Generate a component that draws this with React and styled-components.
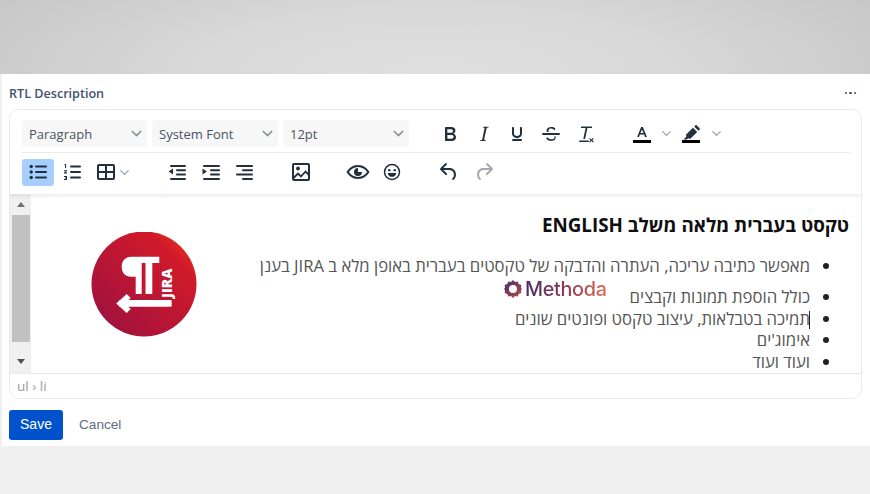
import React from "react";
import styled, { createGlobalStyle } from "styled-components";
import { ChevronDown } from "lucide-react";

const Global = createGlobalStyle`
  html, body { margin: 0; padding: 0; background: #f0f0f0; }
  body { width: 870px; height: 494px; overflow: hidden; font-family: "Open Sans", "Liberation Sans", sans-serif; }
`;

const Page = styled.div`
  width: 870px;
  height: 494px;
  display: flex;
  flex-direction: column;
  background: #f0f0f0;
`;
const TopBand = styled.div`
  height: 74px;
  flex: none;
  background: radial-gradient(ellipse 620px 170px at 50% 100%, #dfdfdf 0%, #d8d8d8 40%, #c8c8c8 80%, #bebebe 100%);
`;
const Card = styled.section`
  margin-left: 2px;
  height: 372px;
  flex: none;
  box-sizing: border-box;
  background: #fff;
  padding: 0 8px 0 7px;
  display: flex;
  flex-direction: column;
`;
const Header = styled.header`
  height: 35px;
  flex: none;
  box-sizing: border-box;
  padding-top: 3px;
  display: flex;
  align-items: center;
  justify-content: space-between;
`;
const Title = styled.h2`
  margin: 0;
  font-size: 12.6px;
  font-weight: 600;
  color: #42526e;
`;
const Dots = styled.div`
  display: flex;
  gap: 2px;
  margin-right: 6px;
  span { width: 2.5px; height: 2.5px; border-radius: 50%; background: #42526e; }
`;
const Editor = styled.div`
  height: 290px;
  box-sizing: border-box;
  border: 1px solid #e9e9e9;
  border-radius: 10px;
  display: flex;
  flex-direction: column;
  overflow: hidden;
  flex: none;
`;
const Toolbar = styled.div`
  height: 84px;
  flex: none;
  box-sizing: border-box;
  padding: 10px 11px 0 12px;
  box-shadow: 0 2px 4px rgba(34, 47, 62, 0.1);
  position: relative;
  z-index: 1;
  background: #fff;
`;
const Row = styled.div`
  display: flex;
  align-items: ${(p) => (p.$line ? "flex-start" : "center")};
  height: ${(p) => p.$h}px;
  border-bottom: ${(p) => (p.$line ? "1px solid #ececec" : "none")};
  box-sizing: border-box;
`;
const Select = styled.div`
  width: ${(p) => p.$w}px;
  height: 27px;
  margin-right: 5px;
  border-radius: 3px;
  background: #f7f7f7;
  box-sizing: border-box;
  padding: 0 2px 0 7px;
  display: flex;
  align-items: center;
  justify-content: space-between;
  font-size: 13px;
  color: #4a5462;
  svg { color: #8a929c; }
`;
const Tool = styled.button`
  width: ${(p) => p.$w || 33.7}px;
  height: 27px;
  flex: none;
  margin-left: ${(p) => p.$gap || 0}px;
  padding: 0;
  border: 0;
  border-radius: 3px;
  background: ${(p) => (p.$active ? "#a6ceff" : "transparent")};
  display: flex;
  align-items: center;
  justify-content: center;
  color: ${(p) => (p.$off ? "#a3a9b0" : "#222f3e")};
  svg { display: block; }
`;
const Chev = styled(ChevronDown)`
  color: #9aa1aa;
`;
const Body = styled.div`
  flex: 1;
  min-height: 0;
  display: flex;
  position: relative;
`;
const Scrollbar = styled.div`
  width: 21px;
  flex: none;
  background: #f0f0f0;
  display: flex;
  flex-direction: column;
  align-items: center;
  padding-top: 8px;
  box-sizing: border-box;
`;
const Arrow = styled.div`
  width: 0;
  height: 0;
  border-left: 4.5px solid transparent;
  border-right: 4.5px solid transparent;
  ${(p) =>
    p.$up
      ? "border-bottom: 5px solid #6f6f6f; margin-bottom: 8px;"
      : "border-top: 5px solid #505050; margin-top: 17px;"}
`;
const Thumb = styled.div`
  width: 18px;
  height: 127px;
  background: #c1c1c1;
`;
const Content = styled.div`
  flex: 1;
  direction: rtl;
  padding: 19px 12px 0 0;
  box-sizing: border-box;
  overflow: hidden;
`;
const Heading = styled.h1`
  margin: 0 0 18px;
  font-size: 18.8px;
  line-height: 24px;
  font-weight: 700;
  color: #0f0f0f;
`;
const List = styled.ul`
  margin: 0;
  padding: 0 39px 0 0;
  list-style: disc;
  font-size: 16.7px;
  line-height: 21.4px;
  color: #555;
  li::marker { color: #222; }
`;
const Item = styled.li`
  margin-bottom: ${(p) => p.$after || 0}px;
  white-space: nowrap;
`;
const Caret = styled.span`
  display: inline-block;
  width: 1px;
  height: 18px;
  background: #222;
  vertical-align: -4px;
  margin-left: -1px;
`;
const LogoMark = styled.svg`
  position: absolute;
  left: 81px;
  top: 38px;
`;
const Methoda = styled.div`
  position: absolute;
  left: 494px;
  top: 83px;
  display: flex;
  align-items: center;
  gap: 3px;
`;
const MethodaWord = styled.span`
  font-family: "Inter", "Liberation Sans", sans-serif;
  font-size: 19.8px;
  font-weight: 500;
  line-height: 24px;
  letter-spacing: -0.3px;
  background: linear-gradient(90deg, #4a2a66 0%, #8f3a5c 50%, #de6a4c 100%);
  -webkit-background-clip: text;
  background-clip: text;
  color: transparent;
`;
const Status = styled.div`
  height: 25px;
  flex: none;
  box-sizing: border-box;
  border-top: 1px solid #e9e9e9;
  padding-left: 7px;
  display: flex;
  align-items: center;
  font-size: 13.5px;
  color: #9a9a9a;
  background: #fff;
  position: relative;
`;
const Actions = styled.div`
  display: flex;
  align-items: center;
  gap: 16px;
  margin-top: 11px;
`;
const Save = styled.button`
  width: 54px;
  height: 30px;
  border: 0;
  border-radius: 3px;
  background: #0052cc;
  color: #fff;
  font: 400 14px/28px "Liberation Sans", sans-serif;
  padding: 0 0 2px;
  box-sizing: border-box;
`;
const Cancel = styled.button`
  border: 0;
  background: none;
  padding: 0 0 2px;
  color: #5e6c84;
  font: 400 13.6px "Liberation Sans", sans-serif;
`;

const I = ({ children, s = 24 }) => (
  <svg width={s} height={s} viewBox="0 0 24 24" fill="currentColor">{children}</svg>
);
const Line = ({ x, y, w, h = 2 }) => <rect x={x} y={y} width={w} height={h} rx={h / 2} />;

const BulletIcon = () => (
  <I>
    <circle cx="5.2" cy="6.5" r="1.7" /><circle cx="5.2" cy="12" r="1.7" /><circle cx="5.2" cy="17.5" r="1.7" />
    <Line x={9} y={5.5} w={12} /><Line x={9} y={11} w={12} /><Line x={9} y={16.5} w={12} />
  </I>
);
const NumberIcon = () => (
  <I>
    <Line x={10} y={5.5} w={11} /><Line x={10} y={11} w={11} /><Line x={10} y={16.5} w={11} />
    <path d="M4.5 4h1.6v4H5V5.1h-.5zM4 10.2h3v.9l-1.6 1.5H7v.9H4v-.9l1.6-1.5H4zM4 16h3v3.9H4V19h2v-.6H4.8v-.8H6V17H4z" />
  </I>
);
const TableIcon = () => (
  <I>
    <path d="M19 4a2 2 0 0 1 2 2v12a2 2 0 0 1-2 2H5a2 2 0 0 1-2-2V6c0-1.1.9-2 2-2h14zM5 13v5h6v-5H5zm14 0h-6v5h6v-5zm0-7h-6v5h6V6zM5 11h6V6H5v5z" />
  </I>
);
const OutdentIcon = () => (
  <I>
    <Line x={5} y={5} w={16} /><Line x={11} y={9.3} w={10} /><Line x={11} y={13.6} w={10} /><Line x={5} y={18} w={16} />
    <path d="M8 8.6v5.8L3.6 11.5z" />
  </I>
);
const IndentIcon = () => (
  <I>
    <Line x={4} y={5} w={17} /><Line x={11} y={9.3} w={10} /><Line x={11} y={13.6} w={10} /><Line x={4} y={18} w={17} />
    <path d="M3.5 8.6v5.8l4.4-2.9z" />
  </I>
);
const AlignRightIcon = () => (
  <I>
    <Line x={4} y={5} w={17} /><Line x={10} y={9.3} w={11} /><Line x={4} y={13.6} w={17} /><Line x={10} y={18} w={11} />
  </I>
);
const ImageIcon = () => (
  <I>
    <path d="M5 3h14a2 2 0 0 1 2 2v14a2 2 0 0 1-2 2H5a2 2 0 0 1-2-2V5c0-1.1.9-2 2-2zm0 2v14h14V5H5z" />
    <path d="M4.500 18l4.500-4.500 3 3 4.500-5 3.500 3.500" fill="none" stroke="currentColor" strokeWidth="1.800" />
    <circle cx="9" cy="8.500" r="1.900" />
  </I>
);
const EyeIcon = () => (
  <svg width="26" height="24" viewBox="0 0 26 24" fill="currentColor">
    <path d="M13 5c5.400 0 9.600 3.600 11.500 7-1.900 3.400-6.100 7-11.500 7S3.400 15.400 1.500 12C3.400 8.600 7.600 5 13 5zm0 2C9 7 5.800 9.400 3.900 12 5.800 14.600 9 17 13 17s7.200-2.400 9.100-5C20.200 9.400 17 7 13 7z" />
    <path d="M13 8a4 4 0 1 0 4 4h-4z" />
  </svg>
);
const SmileIcon = () => (
  <I s={22}>
    <path d="M12 3a9 9 0 1 1 0 18 9 9 0 0 1 0-18zm0 1.700a7.300 7.300 0 1 0 0 14.600 7.300 7.300 0 0 0 0-14.600z" />
    <circle cx="9" cy="10" r="1.300" /><circle cx="15" cy="10" r="1.300" />
    <path d="M7.500 13h9c0 2.500-2 4.300-4.500 4.300S7.500 15.500 7.500 13z" />
  </I>
);
const UndoIcon = () => (
  <I>
    <path d="M6.400 8H12c3.700 0 6.200 2 6.800 5.100.6 2.700-.4 5.600-2.300 6.800a1 1 0 0 1-1-1.700c1.100-.7 1.700-2.700 1.300-4.700-.4-2.100-2.100-3.500-4.800-3.500H6.400l3.300 3.300a1 1 0 1 1-1.400 1.400l-5-5a1 1 0 0 1 0-1.400l5-5a1 1 0 0 1 1.400 1.400L6.400 8z" />
  </I>
);
const RedoIcon = () => (
  <I>
    <path d="M17.600 8H12c-3.700 0-6.200 2-6.800 5.100-.6 2.700.4 5.600 2.300 6.800a1 1 0 0 0 1-1.700c-1.100-.7-1.700-2.700-1.300-4.700.4-2.100 2.100-3.500 4.800-3.500h5.600l-3.300 3.300a1 1 0 1 0 1.400 1.400l5-5a1 1 0 0 0 0-1.400l-5-5a1 1 0 0 0-1.400 1.400L17.600 8z" />
  </I>
);
const BoldIcon = () => (
  <I>
    <path d="M7.800 19c-.3 0-.5 0-.6-.2l-.2-.5V5.700c0-.2 0-.4.200-.5l.6-.2h5c1.500 0 2.700.3 3.500 1 .7.600 1.100 1.400 1.100 2.500a3 3 0 0 1-.6 1.900c-.4.600-1 1-1.600 1.200.4.100.9.300 1.300.6s.8.700 1 1.200c.4.400.5 1 .5 1.600 0 1.300-.4 2.300-1.300 3-.8.700-2.100 1-3.800 1H7.800zm5-8.300c.6 0 1.200-.1 1.600-.5.400-.3.600-.7.600-1.300 0-1.100-.8-1.700-2.300-1.700H9.300v3.500h3.400zm.5 6c.7 0 1.300-.1 1.700-.4.400-.4.600-.9.600-1.500s-.2-1-.7-1.400c-.4-.3-1-.4-2-.4H9.400v3.800h4z" />
  </I>
);
const ItalicIcon = () => (
  <I>
    <path d="M16.700 4.700l-.1.900h-.3c-.6 0-1 0-1.400.3-.3.300-.4.600-.5 1.100l-2.100 9.800v.6c0 .5.400.8 1.400.8h.2l-.2.800H8l.2-.8h.2c1.100 0 1.800-.5 2-1.500l2-9.800.1-.5c0-.6-.4-.8-1.400-.8h-.3l.2-.9h5.800z" />
  </I>
);
const UnderlineIcon = () => (
  <I>
    <path d="M16 5c.6 0 1 .4 1 1v5.500a4 4 0 0 1-.4 1.800l-1 1.400a5.300 5.300 0 0 1-5.500 1 5 5 0 0 1-1.600-1c-.5-.4-.8-.9-1.100-1.400a4 4 0 0 1-.4-1.800V6c0-.6.400-1 1-1s1 .4 1 1v5.500c0 .3 0 .6.200 1l.6.700a3.300 3.300 0 0 0 2.200.8 3.400 3.400 0 0 0 2.200-.8c.3-.2.400-.5.600-.8l.2-.9V6c0-.6.400-1 1-1zM8 17h8c.6 0 1 .4 1 1s-.4 1-1 1H8a1 1 0 0 1 0-2z" />
  </I>
);
const StrikeIcon = () => (
  <I>
    <path d="M4 11h16a1 1 0 0 1 0 2H4a1 1 0 0 1 0-2z" />
    <path d="M15.600 8.500c-.5-.7-1-1.100-1.300-1.300-.6-.4-1.300-.6-2-.6-2.700 0-2.800 1.700-2.800 2.100 0 .5.200.9.500 1.300H8c-.2-.4-.4-.9-.4-1.400C7.600 6.300 9.400 5 12.300 5c1.600 0 3 .5 4 1.400l-.7 2.100zM16.300 14c.3.600.4 1.100.4 1.600 0 1.400-.7 3.400-5 3.400A6.200 6.200 0 0 1 7 16.400l1.500-1.100c.4.600 1.600 2 3.700 2 1.600 0 2.500-.4 3-1 .3-.4.400-1 .4-1.400 0-.3 0-.6-.1-.9h.8z" />
  </I>
);
const ClearIcon = () => (
  <I>
    <path d="M8 4.500h11v1.600h-4.600l-2.300 11H10.300l2.300-11H8z" />
    <rect x="6" y="18.500" width="10" height="1.600" rx=".8" />
    <path d="M17 16l1.500 1.500L20 16l.8.800-1.500 1.500 1.500 1.500-.8.800-1.500-1.500-1.500 1.500-.8-.8 1.500-1.500-1.500-1.500z" />
  </I>
);
const TextColorIcon = () => (
  <I>
    <path d="M12.900 5l4 10h-1.900l-.9-2.400H9.900L9 15H7.100l4-10h1.800zm-.9 2.500l-1.500 3.600h3z" />
    <rect x="3" y="18" width="18" height="3" fill="#000" />
  </I>
);
const HighlightIcon = () => (
  <I>
    <path d="M17.800 3.400l2.800 2.800c.4.400.4 1 0 1.400l-1.200 1.200-4.200-4.200L16.400 3.400c.4-.4 1-.4 1.400 0zM14 5.800l4.200 4.200-6.600 6.400c-.3.300-.7.400-1.100.3l-1.300-.4-1.400 1.300-3.200-.2 2.800-2.800-.3-1.200c-.1-.4 0-.8.300-1.100z" />
    <rect x="3" y="18" width="18" height="3" fill="#000" />
  </I>
);

const Logo = () => (
  <LogoMark width="106" height="106" viewBox="0 0 106 106">
    <defs>
      <linearGradient id="rtlLogo" x1="0" y1="1" x2="1" y2="0">
        <stop offset="0" stopColor="#5a2a7c" />
        <stop offset="0.18" stopColor="#a6123c" />
        <stop offset="0.78" stopColor="#d11a2a" />
        <stop offset="1" stopColor="#f4410f" />
      </linearGradient>
    </defs>
    <circle cx="53" cy="52" r="52.500" fill="url(#rtlLogo)" />
    <g fill="#fff">
      <path d="M40 24.700H68.300V31H61.300V62H54.500V31H50.700V62H44.700V44.700H40C34 44.700 30.700 40.500 30.700 34.700C30.700 29 34.500 24.700 40 24.700Z" />
      <rect x="28" y="68" width="52.700" height="6.700" rx="1" />
      <path d="M35.700 62l4 4-5.500 5.400 5.500 5.500-4 4-10.500-9.500z" />
      <text transform="translate(80.500 66) rotate(-90)" fontFamily="'Open Sans', sans-serif" fontWeight="800" fontSize="14">JIRA</text>
    </g>
  </LogoMark>
);

const MethodaMark = () => (
  <svg width="18" height="18" viewBox="0 0 18 18">
    <defs>
      <linearGradient id="mth" x1="0" y1="0" x2="1" y2="1">
        <stop offset="0" stopColor="#4b2a72" />
        <stop offset="1" stopColor="#b0503f" />
      </linearGradient>
    </defs>
    <path fill="url(#mth)" fillRule="evenodd" d="M9 0l2 2 2.700-.6 1 2.600 2.600 1L17 7.700 18 9l-1 1.300.3 2.700-2.600 1-1 2.600L11 16l-2 2-2-2-2.700.6-1-2.600-2.600-1L1 10.300 0 9l1-1.300-.3-2.700 2.600-1 1-2.600L7 2zM9 5a4 4 0 1 0 0 8 4 4 0 0 0 0-8z" />
  </svg>
);

export default function App() {
  return (
    <Page>
      <Global />
      <TopBand />
      <Card>
        <Header>
          <Title>RTL Description</Title>
          <Dots><span /><span /><span /></Dots>
        </Header>
        <Editor>
          <Toolbar>
            <Row $h={33} $line>
              <Select $w={125}>Paragraph<ChevronDown size={17} /></Select>
              <Select $w={126}>System Font<ChevronDown size={17} /></Select>
              <Select $w={126}>12pt<ChevronDown size={17} /></Select>
              <Tool $gap={19}><BoldIcon /></Tool>
              <Tool><ItalicIcon /></Tool>
              <Tool><UnderlineIcon /></Tool>
              <Tool><StrikeIcon /></Tool>
              <Tool><ClearIcon /></Tool>
              <Tool $gap={24}><TextColorIcon /></Tool>
              <Tool $w={15}><Chev size={15} /></Tool>
              <Tool><HighlightIcon /></Tool>
              <Tool $w={15} $gap={1}><Chev size={15} /></Tool>
            </Row>
            <Row $h={38}>
              <Tool $w={32} $active><BulletIcon /></Tool>
              <Tool $w={34} $gap={1}><NumberIcon /></Tool>
              <Tool $w={34}><TableIcon /></Tool>
              <Tool $w={15} $gap={-6}><Chev size={15} /></Tool>
              <Tool $gap={28}><OutdentIcon /></Tool>
              <Tool><IndentIcon /></Tool>
              <Tool><AlignRightIcon /></Tool>
              <Tool $w={34} $gap={23}><ImageIcon /></Tool>
              <Tool $w={34} $gap={23}><EyeIcon /></Tool>
              <Tool $w={34}><SmileIcon /></Tool>
              <Tool $w={34} $gap={23}><UndoIcon /></Tool>
              <Tool $w={34} $gap={1} $off><RedoIcon /></Tool>
            </Row>
          </Toolbar>
          <Body>
            <Scrollbar>
              <Arrow $up />
              <Thumb />
              <Arrow />
            </Scrollbar>
            <Content>
              <Heading>טקסט בעברית מלאה משלב ENGLISH</Heading>
              <List>
                <Item $after={10}>מאפשר כתיבה עריכה, העתרה והדבקה של טקסטים בעברית באופן מלא ב JIRA בענן</Item>
                <Item>כולל הוספת תמונות וקבצים</Item>
                <Item><Caret />תמיכה בטבלאות, עיצוב טקסט ופונטים שונים</Item>
                <Item>אימוג'ים</Item>
                <Item>ועוד ועוד</Item>
              </List>
            </Content>
            <Logo />
            <Methoda>
              <MethodaMark />
              <MethodaWord>Methoda</MethodaWord>
            </Methoda>
          </Body>
          <Status>ul › li</Status>
        </Editor>
        <Actions>
          <Save>Save</Save>
          <Cancel>Cancel</Cancel>
        </Actions>
      </Card>
    </Page>
  );
}
